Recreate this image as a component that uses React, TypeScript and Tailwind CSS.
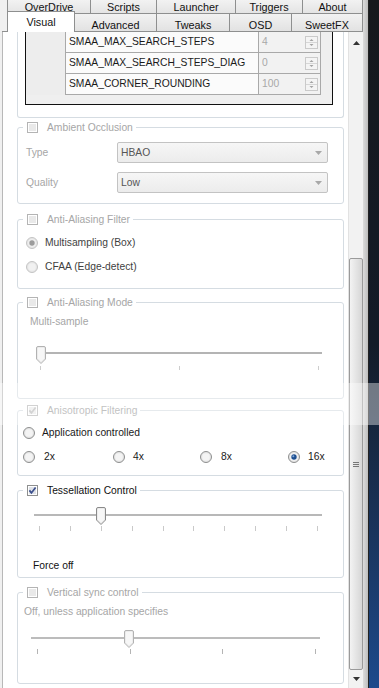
import React from "react";

function CheckBox({ checked, disabled }: { checked?: boolean; disabled?: boolean }) {
  return (
    <svg width="11" height="11" viewBox="0 0 11 11" className="block shrink-0">
      <rect x="0.5" y="0.5" width="10" height="10" fill="#fff" stroke={disabled ? "#b4b4b4" : "#8e8f8f"} />
      <rect x="2" y="2" width="7" height="7" fill={disabled ? "#e9e9e9" : "#dfe2e8"} />
      {checked && (
        <path
          d="M2.4 5.4 L4.4 7.9 L8.6 2.4"
          fill="none"
          stroke={disabled ? "#b6b6b6" : "#3b4f8c"}
          strokeWidth="1.7"
        />
      )}
    </svg>
  );
}

function Radio({ checked, disabled }: { checked?: boolean; disabled?: boolean }) {
  return (
    <svg width="12" height="12" viewBox="0 0 12 12" className="block shrink-0">
      <circle cx="6" cy="6" r="5.5" fill="#e6e6e6" stroke={disabled ? "#c4c4c4" : "#8e8f8f"} />
      <circle cx="6" cy="6" r="3.8" fill={disabled ? "#f1f1f1" : "#f4f4f4"} />
      {checked && <circle cx="6" cy="6" r="2.7" fill={disabled ? "#9c9c9c" : "#1d4f91"} />}
      {checked && !disabled && <circle cx="5.3" cy="5.2" r="1" fill="#7fa6d8" />}
    </svg>
  );
}

function Thumb({ disabled }: { disabled?: boolean }) {
  return (
    <svg width="10" height="18" viewBox="0 0 10 18" className="block">
      <path
        d="M0.5 2 Q0.5 0.5 2 0.5 H8 Q9.5 0.5 9.5 2 V13 L5 17.5 L0.5 13 Z"
        fill="#ececec"
        stroke={disabled ? "#b2b2b2" : "#8a8a8a"}
      />
      <path d="M2 2 H8 V12.5 L5 15.6 L2 12.5 Z" fill="#f7f7f7" />
    </svg>
  );
}

function Spin() {
  return (
    <svg width="13" height="13" viewBox="0 0 13 13" className="block">
      <rect x="0.5" y="0.5" width="12" height="12" fill="#f4f4f4" stroke="#cacaca" />
      <line x1="1" y1="6.5" x2="12" y2="6.5" stroke="#d6d6d6" />
      <path d="M4.5 5 L6.5 3 L8.5 5 Z" fill="#a2a2a2" />
      <path d="M4.5 8 L6.5 10 L8.5 8 Z" fill="#a2a2a2" />
    </svg>
  );
}

function Group({
  title,
  checked,
  disabled,
  titleClass,
  className,
  children,
}: {
  title: string;
  checked?: boolean;
  disabled?: boolean;
  titleClass: string;
  className: string;
  children: React.ReactNode;
}) {
  return (
    <fieldset className={`ml-[14px] w-[327px] border border-[#d5dce2] rounded-[3px] ${className}`}>
      <legend className="ml-[5px] pl-[4px] pr-[3px]">
        <div className="flex items-center h-[11px]">
          <CheckBox checked={checked} disabled={disabled} />
          <span className={`ml-[9px] leading-[11px] ${titleClass}`}>{title}</span>
        </div>
      </legend>
      {children}
    </fieldset>
  );
}

function Dropdown({ value }: { value: string }) {
  return (
    <div className="w-[211px] h-[21px] border border-[#c3c3c3] rounded-[2px] bg-linear-to-b from-[#f6f6f6] to-[#ececec] flex items-center pl-[3px] pr-[5px] text-[#555]">
      <span className="flex-1">{value}</span>
      <svg width="7" height="4" viewBox="0 0 7 4" className="block">
        <path d="M0 0 H7 L3.5 4 Z" fill="#a8a8a8" />
      </svg>
    </div>
  );
}

const rows = [
  { name: "SMAA_MAX_SEARCH_STEPS", value: "4" },
  { name: "SMAA_MAX_SEARCH_STEPS_DIAG", value: "0" },
  { name: "SMAA_CORNER_ROUNDING", value: "100" },
];

const tabsBack = [
  { label: "OverDrive", w: "w-[83px]" },
  { label: "Scripts", w: "w-[66px]" },
  { label: "Launcher", w: "w-[79px]" },
  { label: "Triggers", w: "w-[67px]" },
  { label: "About", w: "w-[61px]" },
];

const tabsFront = [
  { label: "Advanced", w: "w-[82px]" },
  { label: "Tweaks", w: "w-[73px]" },
  { label: "OSD", w: "w-[62px]" },
  { label: "SweetFX", w: "w-[71px]" },
];

export default function App() {
  return (
    <div className="relative w-[379px] h-[688px] overflow-hidden flex bg-[#f0f0f0] text-[10.3px] leading-[12px] text-[#111] font-['Liberation_Sans',Arial,sans-serif]">
      <div className="w-[363px] flex flex-col">
        {/* tab strip */}
        <div className="h-[13px] flex text-[10.8px]">
          <div className="w-[7px]" />
          {tabsBack.map((t, i) => (
            <div
              key={t.label}
              className={`${t.w} h-[13px] border-l border-[#8e8f8f] bg-linear-to-b from-[#f2f2f2] to-[#e4e4e4] flex items-center justify-center ${i === tabsBack.length - 1 ? "border-r" : ""}`}
            >
              {t.label}
            </div>
          ))}
        </div>
        <div className="h-[19px] flex text-[10.8px]">
          <div className="w-[7px] h-[19px] flex">
            <div className="ml-[2px] flex-1 border-b border-[#8e8f8f]" />
          </div>
          <div className="relative z-10 w-[68px] h-[21px] -mt-[2px] border-t border-x border-[#8e8f8f] bg-white flex justify-center pt-[4px]">
            Visual
          </div>
          {tabsFront.map((t) => (
            <div
              key={t.label}
              className={`${t.w} h-[19px] border border-l-0 border-[#8e8f8f] bg-linear-to-b from-[#f2f2f2] to-[#e2e2e2] flex justify-center pt-[5px]`}
            >
              {t.label}
            </div>
          ))}
        </div>

        {/* panel */}
        <div className="flex-1 flex min-h-0">
          <div className="ml-[2px] w-[346px] border-l border-[#b8b8b8] bg-white overflow-hidden flex flex-col">
            {/* parameter table group, top scrolled away */}
            <div className="ml-[14px] w-[327px] border-x border-b border-[#d5dce2] rounded-b-[3px] pb-[12px]">
              <div className="ml-[7px] w-[308px] border-x border-b border-[#111] bg-[#efefef]">
                {rows.map((r) => (
                  <div key={r.name} className="flex h-[21px]">
                    <div className="w-[40px] border-r border-[#a9a9a9] bg-[#ededed]" />
                    <div className="w-[193px] border-r border-b border-[#a9a9a9] bg-[#fbfbfb] flex items-center pl-[3px] text-[#1a1a1a]">
                      {r.name}
                    </div>
                    <div className="w-[62px] border-r border-b border-[#a9a9a9] bg-[#f2f2f2] flex items-center pl-[3px] pr-[2px] text-[#a8a8a8]">
                      <span className="flex-1">{r.value}</span>
                      <Spin />
                    </div>
                    <div className="flex-1" />
                  </div>
                ))}
                <div className="h-[9px]" />
              </div>
            </div>

            <Group title="Ambient Occlusion" disabled titleClass="text-[#a6a6a6]" className="mt-[4px] pb-[10px]">
              <div className="mt-[9px] flex items-center">
                <span className="pl-[8px] w-[99px] text-[#a6a6a6]">Type</span>
                <Dropdown value="HBAO" />
              </div>
              <div className="mt-[9px] flex items-center">
                <span className="pl-[8px] w-[99px] text-[#a6a6a6]">Quality</span>
                <Dropdown value="Low" />
              </div>
            </Group>

            <Group title="Anti-Aliasing Filter" disabled titleClass="text-[#a6a6a6]" className="mt-[10px] pb-[15px]">
              <div className="mt-[12px] h-[12px] pl-[8px] flex items-center text-[#3f3f3f]">
                <Radio checked disabled />
                <span className="ml-[7px]">Multisampling (Box)</span>
              </div>
              <div className="mt-[12px] h-[12px] pl-[8px] flex items-center text-[#3f3f3f]">
                <Radio disabled />
                <span className="ml-[7px]">CFAA (Edge-detect)</span>
              </div>
            </Group>

            <Group title="Anti-Aliasing Mode" disabled titleClass="text-[#a6a6a6]" className="mt-[8px] pb-[28px]">
              <div className="mt-[8px] h-[12px] pl-[12px] text-[#a6a6a6]">Multi-sample</div>
              <div className="relative mt-[18px] ml-[18px] w-[286px] h-[18px] pt-[6px]">
                <div className="h-[2px] bg-[#b4b4b4]" />
                <div className="absolute top-0 left-0">
                  <Thumb disabled />
                </div>
              </div>
              <div className="mt-[2px] ml-[22px] w-[279px] h-[4px] flex justify-between">
                <div className="w-[1px] bg-[#cdcdcd]" />
                <div className="w-[1px] bg-[#cdcdcd]" />
                <div className="w-[1px] bg-[#cdcdcd]" />
              </div>
            </Group>

            <Group title="Anisotropic Filtering" checked disabled titleClass="text-[#9a9a9a]" className="mt-[6px] pb-[12px]">
              <div className="mt-[11px] h-[12px] pl-[5px] flex items-center text-[#1a1a1a]">
                <Radio />
                <span className="ml-[7px]">Application controlled</span>
              </div>
              <div className="mt-[12px] h-[12px] pl-[5px] flex items-center text-[#1a1a1a]">
                <div className="w-[90px] flex items-center">
                  <Radio />
                  <span className="ml-[9px]">2x</span>
                </div>
                <div className="w-[87px] flex items-center">
                  <Radio />
                  <span className="ml-[8px]">4x</span>
                </div>
                <div className="w-[88px] flex items-center">
                  <Radio />
                  <span className="ml-[9px]">8x</span>
                </div>
                <div className="flex items-center">
                  <Radio checked />
                  <span className="ml-[8px]">16x</span>
                </div>
              </div>
            </Group>

            <Group title="Tessellation Control" checked titleClass="text-[#111]" className="mt-[9px] pb-[5px]">
              <div className="relative mt-[11px] ml-[16px] w-[288px] h-[18px] pt-[7px]">
                <div className="h-[2px] bg-[#b8b8b8]" />
                <div className="absolute top-0 left-[62px]">
                  <Thumb />
                </div>
              </div>
              <div className="mt-[1px] ml-[21px] w-[279px] h-[5px] flex justify-between">
                {Array.from({ length: 10 }).map((_, i) => (
                  <div key={i} className="w-[1px] bg-[#c9c9c9]" />
                ))}
              </div>
              <div className="mt-[29px] h-[12px] pl-[15px] text-[#111]">Force off</div>
            </Group>

            <Group title="Vertical sync control" disabled titleClass="text-[#a6a6a6]" className="mt-[9px] pb-[29px]">
              <div className="mt-[8px] h-[12px] pl-[6px] text-[#a6a6a6]">Off, unless application specifies</div>
              <div className="relative mt-[12px] ml-[13px] w-[289px] h-[18px] pt-[7px]">
                <div className="h-[2px] bg-[#bcbcbc]" />
                <div className="absolute top-0 left-[93px]">
                  <Thumb disabled />
                </div>
              </div>
              <div className="mt-[1px] ml-[19px] w-[279px] h-[5px] flex justify-between">
                <div className="w-[1px] bg-[#b4b4b4]" />
                <div className="w-[1px] bg-[#b4b4b4]" />
                <div className="w-[1px] bg-[#b4b4b4]" />
                <div className="w-[1px] bg-[#b4b4b4]" />
              </div>
            </Group>
          </div>

          {/* scrollbar */}
          <div className="w-[15px] flex flex-col bg-[#f2f2f2] border-l border-[#e2e2e2]">
            <div className="h-[22px] flex items-center justify-center">
              <svg width="7" height="4" viewBox="0 0 7 4" className="block">
                <path d="M0 4 L3.5 0 L7 4 Z" fill="#333" />
              </svg>
            </div>
            <div className="h-[204px]" />
            <div className="h-[412px] border border-[#9a9a9a] rounded-[2px] bg-linear-to-r from-[#f3f3f3] to-[#d6d6d6] flex flex-col items-center justify-center">
              <div className="w-[6px] flex flex-col gap-[1px]">
                <div className="h-[1px] bg-[#777]" />
                <div className="h-[1px] bg-[#777]" />
                <div className="h-[1px] bg-[#777]" />
              </div>
            </div>
            <div className="h-[18px] flex items-center justify-center">
              <svg width="7" height="4" viewBox="0 0 7 4" className="block">
                <path d="M0 0 L7 0 L3.5 4 Z" fill="#333" />
              </svg>
            </div>
          </div>
        </div>
      </div>

      {/* window frame and desktop */}
      <div className="w-[6px] bg-linear-to-r from-[#dcdcdc] to-[#bdbdbd] border-r border-[#222]" />
      <div className="flex-1 bg-linear-to-b from-[#16181c] via-[#131b28] to-[#1d4a8c]" />

      {/* light band across the screenshot */}
      <div className="absolute left-0 right-0 top-[383px] h-[42px] bg-white/40 pointer-events-none" />
    </div>
  );
}
